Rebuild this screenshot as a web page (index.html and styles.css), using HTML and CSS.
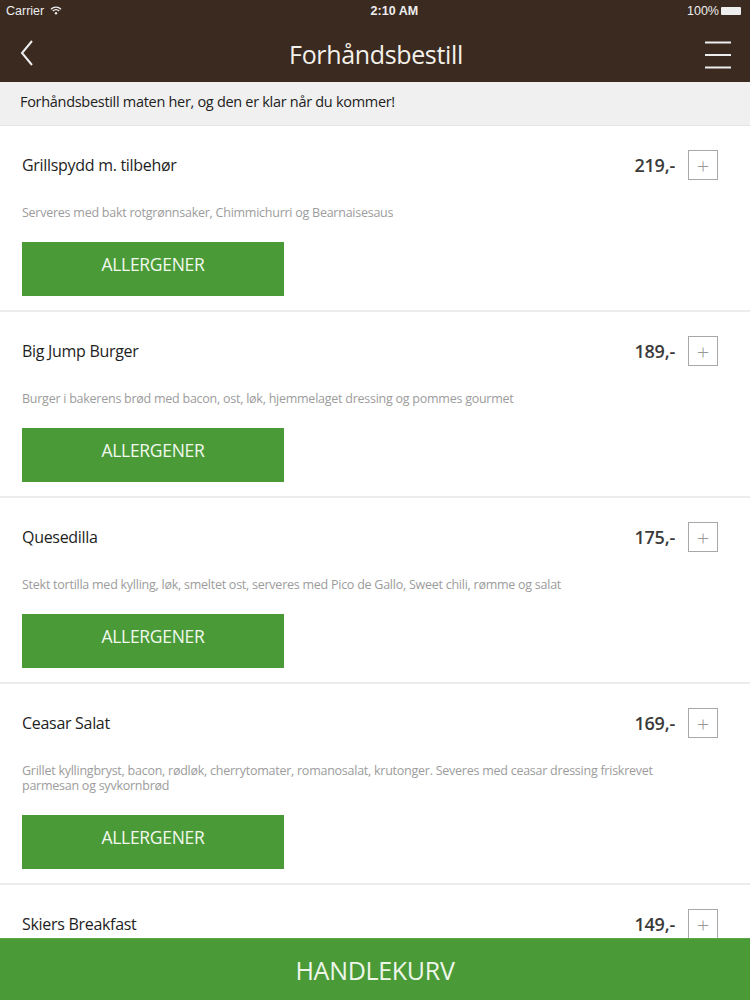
FILE: index.html
```html
<!DOCTYPE html>
<html lang="no">
<head>
  <meta charset="UTF-8">
  <title>Forhåndsbestill</title>
  <link rel="stylesheet" href="styles.css">
</head>
<body>

  <div class="topbar">
    <div class="status">
      <span class="carrier">Carrier
        <svg width="12" height="9" viewBox="0 0 12 9"><path d="M1 3.2a7 7 0 0 1 10 0M2.8 5a4.4 4.4 0 0 1 6.4 0" fill="none" stroke="#eee" stroke-width="1.4"/><circle cx="6" cy="7.3" r="1.2" fill="#eee"/></svg>
      </span>
      <span class="clock">2:10 AM</span>
      <span class="battery">100% <i class="batt"></i></span>
    </div>
    <div class="nav">
      <svg class="back" width="16" height="28" viewBox="0 0 16 28"><path d="M13 2 L3 14 L13 26" fill="none" stroke="#eee" stroke-width="2"/></svg>
      <h1>Forhåndsbestill</h1>
      <svg class="menu" width="30" height="30" viewBox="0 0 30 30"><path d="M2 2.5h26M2 15h26M2 27.5h26" stroke="#eee" stroke-width="2"/></svg>
    </div>
  </div>

  <div class="intro">Forhåndsbestill maten her, og den er klar når du kommer!</div>

  <div class="list">
    <div class="item">
      <div class="row">
        <span class="name">Grillspydd m. tilbehør</span>
        <span class="price">219,-</span>
        <span class="plus">+</span>
      </div>
      <p class="desc">Serveres med bakt rotgrønnsaker, Chimmichurri og Bearnaisesaus</p>
      <button class="allergy">ALLERGENER</button>
    </div>

    <div class="item">
      <div class="row">
        <span class="name">Big Jump Burger</span>
        <span class="price">189,-</span>
        <span class="plus">+</span>
      </div>
      <p class="desc">Burger i bakerens brød med bacon, ost, løk, hjemmelaget dressing og pommes gourmet</p>
      <button class="allergy">ALLERGENER</button>
    </div>

    <div class="item">
      <div class="row">
        <span class="name">Quesedilla</span>
        <span class="price">175,-</span>
        <span class="plus">+</span>
      </div>
      <p class="desc">Stekt tortilla med kylling, løk, smeltet ost, serveres med Pico de Gallo, Sweet chili, rømme og salat</p>
      <button class="allergy">ALLERGENER</button>
    </div>

    <div class="item">
      <div class="row">
        <span class="name">Ceasar Salat</span>
        <span class="price">169,-</span>
        <span class="plus">+</span>
      </div>
      <p class="desc">Grillet kyllingbryst, bacon, rødløk, cherrytomater, romanosalat, krutonger. Severes med ceasar dressing friskrevet<br>parmesan og syvkornbrød</p>
      <button class="allergy">ALLERGENER</button>
    </div>

    <div class="item">
      <div class="row">
        <span class="name">Skiers Breakfast</span>
        <span class="price">149,-</span>
        <span class="plus">+</span>
      </div>
    </div>
  </div>

  <div class="cart">HANDLEKURV</div>

</body>
</html>
```

FILE: styles.css
```css
body {
  margin: 0;
  font-family: "Open Sans", "Noto Sans", sans-serif;
  background: #fff;
  height: 1000px;
  display: flex;
  flex-direction: column;
  overflow: hidden;
}
.topbar {
  background: #3b2a20;
  color: #eee;
  height: 82px;
  flex: none;
}
.status {
  height: 21px;
  display: flex;
  align-items: center;
  justify-content: space-between;
  padding: 0 6px;
  font-family: "Liberation Sans", sans-serif;
  font-size: 12.5px;
}
.carrier svg {
  margin-left: 2px;
}
.clock {
  font-weight: bold;
  margin-left: 40px;
}
.battery {
  display: flex;
  align-items: center;
  gap: 2px;
}
.batt {
  display: inline-block;
  width: 20px;
  height: 8px;
  background: #eee;
  border-radius: 1px;
  margin-right: 3px;
}
.nav {
  height: 61px;
  display: grid;
  grid-template-columns: 1fr auto 1fr;
  align-items: center;
  padding: 0 17px 0 19px;
}
.nav h1 {
  margin: 0 0 -4px;
  font-weight: normal;
  font-size: 25px;
  color: #f4f0ea;
  letter-spacing: -0.35px;
}
.menu {
  margin-top: 6px;
  justify-self: end;
}
.back {
  margin-top: 2px;
}
.intro {
  background: #f0f0f0;
  font-size: 14.5px;
  color: #222;
  height: 43px;
  line-height: 40px;
  padding-left: 20px;
  letter-spacing: -0.3px;
  border-bottom: 1px solid #e4e4e4;
  flex: none;
}
.list {
  flex: 1;
  overflow: hidden;
}
.item {
  padding: 24px 32px 14px 22px;
  border-bottom: 2px solid #ececec;
}
.row {
  display: flex;
  align-items: center;
  height: 30px;
}
.name {
  flex: 1;
  font-size: 16px;
  color: #1e1e1e;
  letter-spacing: -0.3px;
}
.price {
  font-size: 18px;
  font-weight: 600;
  color: #3a3a3a;
  margin-right: 13px;
  letter-spacing: -0.2px;
}
.plus {
  width: 28px;
  height: 28px;
  border: 1px solid #a8a8a8;
  display: flex;
  align-items: center;
  justify-content: center;
  color: #999;
  font-size: 22px;
  font-weight: 300;
  line-height: 1;
}
.desc {
  margin: 25px 0 22px;
  font-size: 12.5px;
  line-height: 15px;
  color: #9c9c9c;
  letter-spacing: -0.25px;
}
.allergy {
  display: block;
  width: 262px;
  height: 54px;
  border: none;
  background: #4a9b37;
  color: #f2f8ee;
  font-family: "Open Sans", "Noto Sans", sans-serif;
  font-size: 17.5px;
  padding: 0 0 10px;
  letter-spacing: -0.3px;
}
.cart {
  flex: none;
  height: 62px;
  background: #4a9b37;
  color: #eef6ea;
  font-size: 25px;
  text-align: center;
  line-height: 62px;
  letter-spacing: -0.3px;
  border-top: 1px solid #5aaa48;
  box-sizing: border-box;
}
```
